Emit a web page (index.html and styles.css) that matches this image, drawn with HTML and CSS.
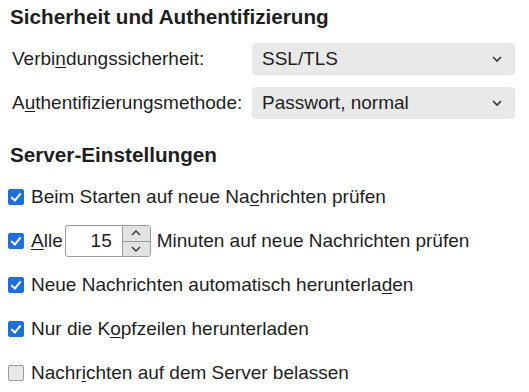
FILE: index.html
```html
<!DOCTYPE html>
<html lang="de">
<head>
  <meta charset="UTF-8">
  <title>Server-Einstellungen</title>
  <link rel="stylesheet" href="styles.css">
</head>
<body>
  <h2 class="section-title">Sicherheit und Authentifizierung</h2>

  <div class="form-grid">
    <label class="field-label">Verbi<u>n</u>dungssicherheit:</label>
    <div class="select">
      <span>SSL/TLS</span>
      <svg class="chevron" width="10" height="6" viewBox="0 0 10 6"><path d="M1 1l4 4 4-4" fill="none" stroke="#333" stroke-width="1.6"/></svg>
    </div>

    <label class="field-label">A<u>u</u>thentifizierungsmethode:</label>
    <div class="select">
      <span>Passwort, normal</span>
      <svg class="chevron" width="10" height="6" viewBox="0 0 10 6"><path d="M1 1l4 4 4-4" fill="none" stroke="#333" stroke-width="1.6"/></svg>
    </div>
  </div>

  <h2 class="section-title second">Server-Einstellungen</h2>

  <div class="options">
    <div class="option">
      <span class="check checked"></span>
      <span>Beim Starten auf neue Na<u>c</u>hrichten prüfen</span>
    </div>
    <div class="option">
      <span class="check checked"></span>
      <span><u>A</u>lle</span>
      <div class="spinbox">
        <span class="spin-value">15</span>
        <div class="spin-buttons">
          <div class="spin-btn"><svg width="10" height="6" viewBox="0 0 10 6"><path d="M1 5l4-4 4 4" fill="none" stroke="#333" stroke-width="1.4"/></svg></div>
          <div class="spin-btn"><svg width="10" height="6" viewBox="0 0 10 6"><path d="M1 1l4 4 4-4" fill="none" stroke="#333" stroke-width="1.4"/></svg></div>
        </div>
      </div>
      <span>Minuten auf neue Nachrichten prüfen</span>
    </div>
    <div class="option">
      <span class="check checked"></span>
      <span>Neue Nachrichten automatisch herunterla<u>d</u>en</span>
    </div>
    <div class="option">
      <span class="check checked"></span>
      <span>Nur die K<u>o</u>pfzeilen herunterladen</span>
    </div>
    <div class="option">
      <span class="check"></span>
      <span>Nachr<u>i</u>chten auf dem Server belassen</span>
    </div>
  </div>
</body>
</html>
```

FILE: styles.css
```css
body {
  margin: 0;
  padding: 6px 14px 0 10px;
  font-family: 'Liberation Sans', Arial, sans-serif;
  font-size: 19px;
  color: #1e1e1e;
  background-color: #fff;
}

u {
  text-underline-offset: 2px;
}

.section-title {
  margin: 0;
  font-size: 20.7px;
  font-weight: bold;
  color: #1e1e1e;
  line-height: 22px;
}

.section-title.second {
  margin-top: 25px;
}

.form-grid {
  display: grid;
  grid-template-columns: 242px 1fr;
  row-gap: 12px;
  align-items: center;
  margin-top: 15px;
}

.field-label {
  padding-left: 2px;
}

.select {
  display: flex;
  align-items: center;
  justify-content: space-between;
  height: 32px;
  padding: 0 13px 0 10px;
  background-color: #e9e9e9;
  border-radius: 4px;
}

.chevron {
  display: block;
}

.options {
  margin-top: 9px;
  display: flex;
  flex-direction: column;
}

.option {
  display: flex;
  align-items: center;
  height: 44px;
}

.check {
  width: 14px;
  height: 14px;
  margin: 0 7px 0 -2px;
  border: 1px solid #9a9a9a;
  border-radius: 2px;
  background-color: #e8e8e8;
  flex-shrink: 0;
  position: relative;
}

.check.checked {
  background-color: #1c6fdc;
  border-color: #1c6fdc;
}

.check.checked::before {
  content: '';
  position: absolute;
  left: 4px;
  top: 1px;
  width: 4px;
  height: 8px;
  border-right: 2px solid #fff;
  border-bottom: 2px solid #fff;
  transform: rotate(40deg);
}

.spinbox {
  display: flex;
  margin: 0 6px 0 2px;
  width: 86px;
  height: 32px;
  border: 1px solid #9c9c9c;
  border-radius: 3px;
  box-sizing: border-box;
  overflow: hidden;
}

.spin-value {
  flex: 1;
  text-align: right;
  padding-right: 10px;
  line-height: 30px;
}

.spin-buttons {
  width: 27px;
  display: flex;
  flex-direction: column;
  border-left: 1px solid #9c9c9c;
}

.spin-btn {
  flex: 1;
  display: flex;
  align-items: center;
  justify-content: center;
  background-color: #e2e2e2;
}

.spin-btn + .spin-btn {
  border-top: 1px solid #9c9c9c;
}

.spin-btn svg {
  display: block;
}
```
